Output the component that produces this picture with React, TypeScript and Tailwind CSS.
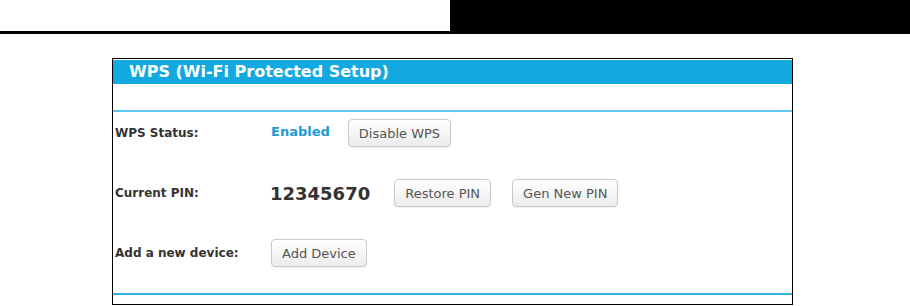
import type { ReactNode } from "react";

function Btn({ children }: { children: ReactNode }) {
  return (
    <button className="h-[28px] px-[10px] rounded-[4px] border border-[#c9c9c9] bg-gradient-to-b from-white to-[#ececec] text-[13px] text-[#555] leading-none shadow-[0_1px_1px_rgba(0,0,0,0.06)]">
      {children}
    </button>
  );
}

function Row({ label, children }: { label: string; children: ReactNode }) {
  return (
    <div className="flex items-center h-[28px]">
      <div className="w-[158px] pl-[2px] font-bold text-[12px] text-[#333]">{label}</div>
      <div className="flex items-center">{children}</div>
    </div>
  );
}

export default function App() {
  return (
    <div
      className="w-[910px] h-[306px] bg-white overflow-hidden"
      style={{ fontFamily: '"DejaVu Sans", Verdana, sans-serif' }}
    >
      {/* page header strip */}
      <div className="flex h-[34px]">
        <div className="w-[450px] border-b-[3px] border-black" />
        <div className="flex-1 bg-black" />
      </div>

      <div className="mt-[24px] ml-[112px] w-[681px] h-[247px] border border-black">
        <div className="pt-[1px]">
          <div className="h-[24px] bg-[#11a9e0] flex items-center pl-[16px] text-white font-bold text-[16px]">
            WPS (Wi-Fi Protected Setup)
          </div>
        </div>
        <div className="h-[26px]" />
        <div className="h-[2px] bg-[#5ec5ec]" />

        <div className="pt-[7px] pb-[26px] flex flex-col gap-[32px]">
          <Row label="WPS Status:">
            <span className="font-bold text-[13px] text-[#1a9bd5] -mt-[3px]">Enabled</span>
            <div className="ml-[18px]">
              <Btn>Disable WPS</Btn>
            </div>
          </Row>
          <Row label="Current PIN:">
            <span className="font-bold text-[18px] text-[#333] -ml-[1px]">12345670</span>
            <div className="ml-[24px]">
              <Btn>Restore PIN</Btn>
            </div>
            <div className="ml-[21px]">
              <Btn>Gen New PIN</Btn>
            </div>
          </Row>
          <Row label="Add a new device:">
            <Btn>Add Device</Btn>
          </Row>
        </div>
        <div className="h-[2px] bg-[#2fb3e6]" />
      </div>
    </div>
  );
}
